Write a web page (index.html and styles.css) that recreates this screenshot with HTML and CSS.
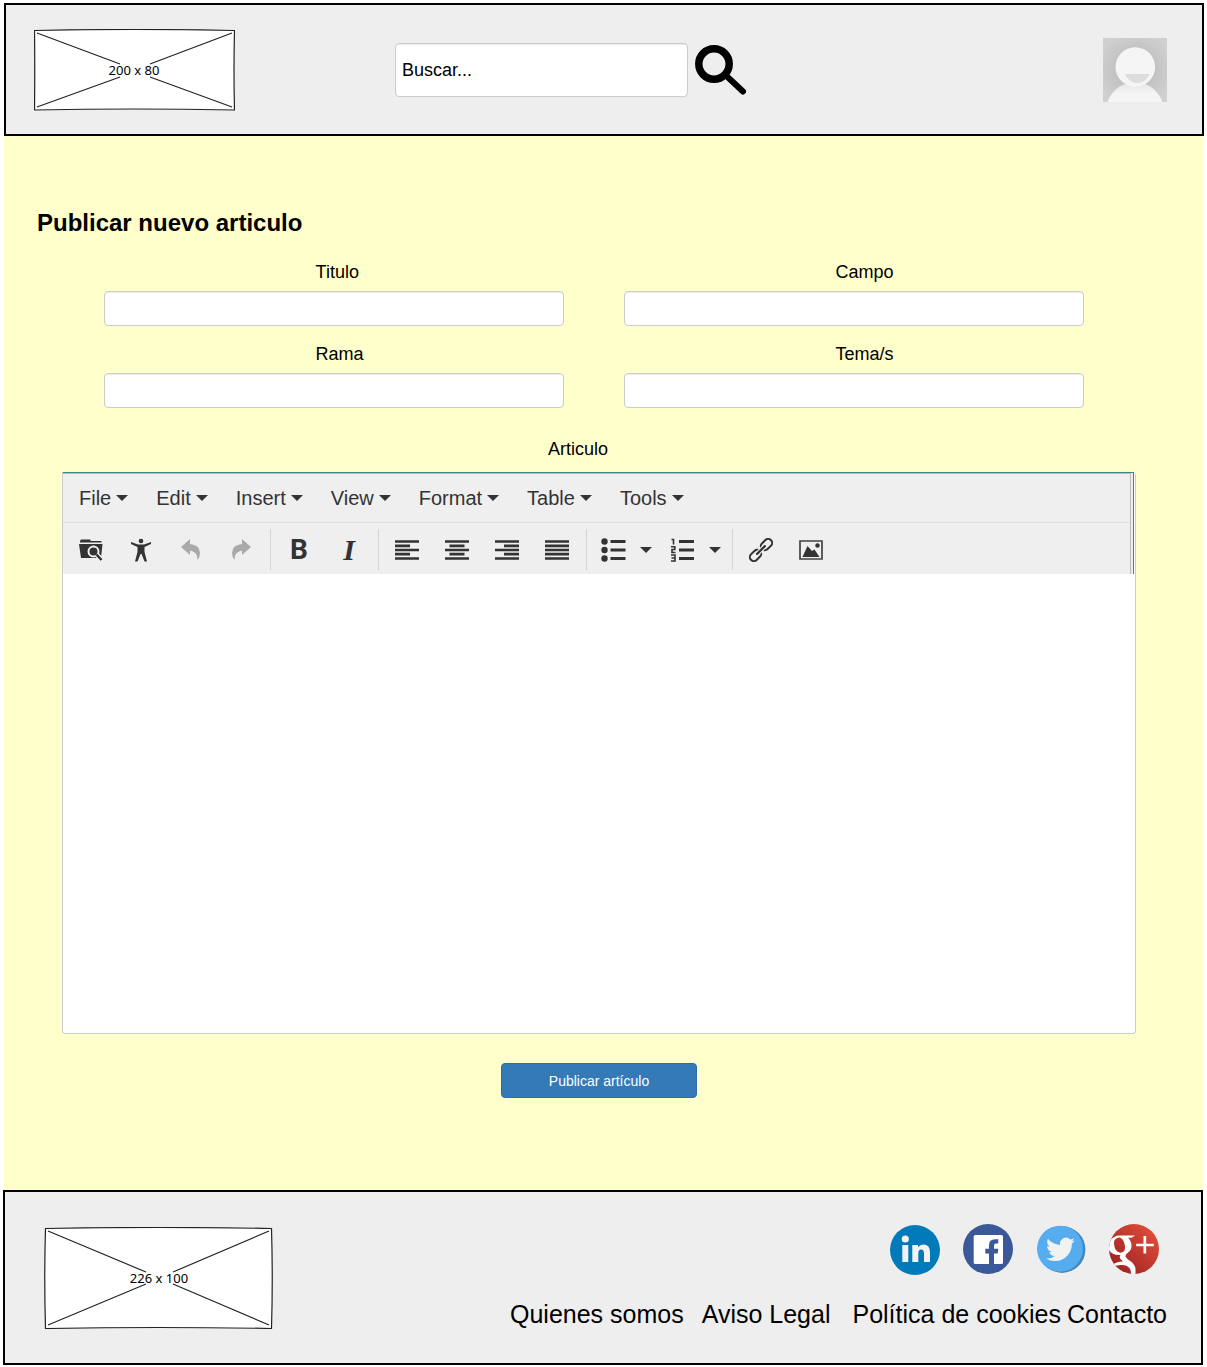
FILE: index.html
```html
<!DOCTYPE html>
<html lang="es">
<head>
<meta charset="utf-8">
<meta name="viewport" content="width=device-width, initial-scale=1">
<title>Publicar nuevo articulo</title>
<link rel="stylesheet" href="styles.css">
</head>
<body>
<header class="site-header">
  <a class="logo" href="#" aria-label="Inicio">
    <svg width="201" height="82" viewBox="0 0 201 82">
      <path d="M.5 1.5Q100 -.5 200.500 1.500Q199.500 41 200.500 81Q100 79 .5 81Q1 41 .5 1.500Z" fill="#fff" stroke="#222" stroke-width="1.200"/>
      <path d="M3 4 86 35M198 4 116 35M3 78 86 48M198 78 116 48" stroke="#222" stroke-width="1.200"/>
      <text class="logo-size" x="100" y="46">200 x 80</text>
    </svg>
  </a>
  <form class="search" role="search">
    <input class="search-input" type="text" value="Buscar..." aria-label="Buscar">
    <button class="search-button" type="button" aria-label="Buscar">
      <svg width="52" height="51" viewBox="0 0 52 51" fill="none" stroke="#000">
        <circle cx="19" cy="19" r="15.200" stroke-width="7.500"/>
        <path d="M31 30.500 48 46.500" stroke-width="6" stroke-linecap="round"/>
      </svg>
    </button>
  </form>
  <a class="avatar" href="#" aria-label="Perfil">
    <svg width="64" height="64" viewBox="0 0 64 64">
      <defs>
        <radialGradient id="shade" cx="50%" cy="50%" r="60%"><stop offset=".5" stop-color="#c2c2c2"/><stop offset="1" stop-color="#d0d0d0"/></radialGradient>
        <linearGradient id="torso" x1="0" y1="0" x2="0" y2="1"><stop offset="0" stop-color="#e4e4e4"/><stop offset=".6" stop-color="#f5f5f5"/></linearGradient>
      </defs>
      <path fill="url(#shade)" d="M0 0h64v64H0z"/>
      <path fill="url(#torso)" d="M4.500 64C10 50 21 44 32 44S54 50 59.500 64Z"/>
      <circle cx="32.300" cy="29" r="19.800" fill="#f5f5f5"/>
      <path fill="#ddd" d="M21.500 36H47Q42 45 34.300 45T21.500 36Z"/>
    </svg>
  </a>
</header>

<main class="content">
  <h1 class="title">Publicar nuevo articulo</h1>
  <form>
    <div class="fields">
      <div class="field"><label for="titulo">Titulo</label><input id="titulo" type="text"></div>
      <div class="field"><label for="campo">Campo</label><input id="campo" type="text"></div>
      <div class="field"><label for="rama">Rama</label><input id="rama" type="text"></div>
      <div class="field"><label for="temas">Tema/s</label><input id="temas" type="text"></div>
    </div>
    <div class="article">
      <label class="article-label" for="articulo">Articulo</label>
      <div class="editor">
        <div class="editor-bars">
          <div class="bars-inner">
            <div class="menu-bar">
              <button type="button">File</button>
              <button type="button">Edit</button>
              <button type="button">Insert</button>
              <button type="button">View</button>
              <button type="button">Format</button>
              <button type="button">Table</button>
              <button type="button">Tools</button>
            </div>
            <div class="tool-bar">
              <div class="group">
                <button type="button" aria-label="Explorar"><svg width="24" height="24" viewBox="0 0 24 24"><path d="M1 3 2 1.500H11L12 3H22.500V4.500H1ZM0 6H23.500L22 20H2Z" fill="#333"/><circle cx="14.500" cy="13.500" r="5" fill="#333" stroke="#f0f0f0" stroke-width="2"/><path d="m18 17 5 5" stroke="#f0f0f0" stroke-width="5"/><path d="m17.500 16.500 5 5.500" stroke="#333" stroke-width="2.500"/></svg></button>
                <button type="button" aria-label="Accesibilidad"><svg width="24" height="24" viewBox="0 0 24 24" fill="#333"><circle cx="12" cy="3" r="2.300"/><path d="M2 4 9 6.500H15L22 4V6L15.500 9V14L18 23.500H15.500L12.500 16H11.500L8.500 23.500H6L8.500 14V9L2 6Z"/></svg></button>
                <button type="button" aria-label="Deshacer"><svg width="22" height="24" viewBox="0 0 22 24"><path d="M1 9 10 1V6Q20 7 20 15 20 19 17.500 22 18 14 10 12.500V17Z" fill="#aaa"/></svg></button>
                <button type="button" aria-label="Rehacer"><svg width="22" height="24" viewBox="0 0 22 24"><path d="M21 9 12 1V6Q2 7 2 15 2 19 4.500 22 4 14 12 12.500V17Z" fill="#aaa"/></svg></button>
              </div>
              <div class="group">
                <button class="bold" type="button">B</button>
                <button class="italic" type="button">I</button>
              </div>
              <div class="group">
                <button type="button" aria-label="Alinear a la izquierda"><svg width="24" height="22" viewBox="0 0 24 22" stroke="#333" stroke-width="2.700"><path d="M0 2.500H24M0 6.800H15M0 11H24M0 15.200H15M0 19.500H24"/></svg></button>
                <button type="button" aria-label="Centrar"><svg width="24" height="22" viewBox="0 0 24 22" stroke="#333" stroke-width="2.700"><path d="M0 2.500H24M4.500 6.800H19.500M0 11H24M4.500 15.200H19.500M0 19.500H24"/></svg></button>
                <button type="button" aria-label="Alinear a la derecha"><svg width="24" height="22" viewBox="0 0 24 22" stroke="#333" stroke-width="2.700"><path d="M0 2.500H24M9 6.800H24M0 11H24M9 15.200H24M0 19.500H24"/></svg></button>
                <button type="button" aria-label="Justificar"><svg width="24" height="22" viewBox="0 0 24 22" stroke="#333" stroke-width="2.700"><path d="M0 2.500H24M0 6.800H24M0 11H24M0 15.200H24M0 19.500H24"/></svg></button>
              </div>
              <div class="group">
                <button class="split" type="button" aria-label="Lista"><svg width="25" height="24" viewBox="0 0 25 24" fill="#333"><circle cx="3.500" cy="3.500" r="3.200"/><circle cx="3.500" cy="12" r="3.200"/><circle cx="3.500" cy="20.500" r="3.200"/><path d="M9.500 2H24.500V5H9.500ZM9.500 10.500H24.500V13.500H9.500ZM9.500 19H24.500V22H9.500Z"/></svg></button>
                <button class="split" type="button" aria-label="Lista numerada"><svg width="25" height="24" viewBox="0 0 25 24" fill="none" stroke="#333" stroke-width="1.600"><path d="M1.500 1.500H3.500V6.500M1 8.800H4.800V11.500H2V14.500H5.500M1 17H5V23H1M1.500 20H5"/><path d="M9 3.500H24M9 12H24M9 20.500H24" stroke-width="3"/></svg></button>
              </div>
              <div class="group">
                <button type="button" aria-label="Enlace"><svg width="24" height="24" viewBox="0 0 24 24" fill="none" stroke="#333" stroke-width="2"><g transform="rotate(-45 12 12)"><rect x="-2" y="8" width="12.500" height="8" rx="3.800"/><rect x="13.500" y="8" width="12.500" height="8" rx="3.800"/><path d="M6.500 12H17.500" stroke="#efefef" stroke-width="4.500"/><path d="M6.500 12H17.500" stroke-width="2.200" stroke-linecap="round"/></g></svg></button>
                <button type="button" aria-label="Imagen"><svg width="24" height="20" viewBox="0 0 24 20"><path d="M1 1H23V19H1Z" fill="none" stroke="#444" stroke-width="1.700"/><path d="M3.500 17 8.500 6 13 11 15.500 9.500 20.500 17Z" fill="#333"/><circle cx="18.500" cy="5.500" r="2.200" fill="#333"/></svg></button>
              </div>
            </div>
          </div>
        </div>
        <textarea id="articulo"></textarea>
      </div>
      <button class="publish" type="submit">Publicar artículo</button>
    </div>
  </form>
</main>

<footer class="site-footer">
  <a class="logo" href="#" aria-label="Inicio">
    <svg width="229" height="102" viewBox="0 0 229 102">
      <path d="M1.500 1.500Q114 -.5 227.500 1.500Q229 51 227.500 101.500Q114 99.500 1.500 101.500Q0 51 1.500 1.500Z" fill="#fff" stroke="#222" stroke-width="1.200"/>
      <path d="M4 4 102 45M225 4 129 45M4 98 102 57M225 98 129 57" stroke="#222" stroke-width="1.200"/>
      <text class="logo-size" x="115" y="56">226 x 100</text>
    </svg>
  </a>
  <div class="footer-side">
    <div class="social">
      <a href="#" aria-label="LinkedIn"><svg width="50" height="51" viewBox="0 0 50 51"><circle cx="25" cy="26" r="25" fill="#007ab9"/><g fill="#f1f2f2"><circle cx="15.300" cy="15" r="3.600"/><path d="M12.300 21H18.300V38H12.300ZM22.300 21H28V23.300Q30 20.500 33.500 20.500 40 20.500 40 28.500V38H34V29.500Q34 25.500 31.300 25.500 28.300 25.500 28.300 29.500V38H22.300Z"/></g></svg></a>
      <a href="#" aria-label="Facebook"><svg width="50" height="51" viewBox="0 0 50 51"><circle cx="25" cy="25" r="25" fill="#3b5998"/><rect x="10.700" y="11" width="29.300" height="29" rx="1.600" fill="#fff"/><path d="M26 41V29.500H22.300V24.700H26V21.500Q26 15.200 32 15.200H35.300V19.500H33Q31 19.500 31 21.500V24.700H35.300L34.700 29.500H31V41Z" fill="#3b5998"/></svg></a>
      <a href="#" aria-label="Twitter"><svg width="50" height="51" viewBox="0 0 50 51"><circle cx="26" cy="25.500" r="23.400" fill="#4288bf"/><circle cx="24" cy="24.800" r="23" fill="#55acee"/><path transform="translate(10 11) scale(1.200)" fill="#f1f2f2" d="M23.950 4.570a10 10 0 0 1-2.820.77 4.960 4.960 0 0 0 2.160-2.720c-.95.560-2 .96-3.130 1.190a4.920 4.920 0 0 0-8.380 4.480C7.690 8.100 4.070 6.130 1.640 3.160a4.820 4.820 0 0 0-.67 2.480c0 1.710.87 3.210 2.190 4.100a4.900 4.900 0 0 1-2.230-.62v.06a4.920 4.920 0 0 0 3.950 4.830 5 5 0 0 1-2.210.08 4.940 4.940 0 0 0 4.600 3.420A9.870 9.870 0 0 1 0 19.540a14 14 0 0 0 7.550 2.210c9.050 0 14-7.500 14-13.980 0-.21 0-.42-.02-.63a9.940 9.940 0 0 0 2.420-2.570z"/></svg></a>
      <a href="#" aria-label="Google+"><svg width="50" height="51" viewBox="0 0 50 51"><defs><linearGradient id="gplus" x1="0" y1="1" x2="1" y2="0"><stop offset=".2" stop-color="#a52724"/><stop offset=".85" stop-color="#dc4a38"/></linearGradient><clipPath id="disc"><circle cx="25" cy="25" r="25"/></clipPath></defs><circle cx="25" cy="25" r="25" fill="url(#gplus)"/><g clip-path="url(#disc)"><path fill="#fff" fill-rule="evenodd" d="M10 11.500H26L22.500 13.800H19Q22.500 17 22.500 22 22.500 26 19 28.500 16 31 16.500 32.500 17.500 34.500 20.500 36.500 26 40 26.500 45V50H22Q22.500 42 14 41 8 40.500 4.500 42.500L3.500 41Q7 37.500 14 37.500L11.500 35Q10 33 11.500 31Q3 31.500 0 26V18Q4 12 10 11.500ZM10.500 13.500Q4.500 14 5 20 6 28.500 11.500 28.700 16.500 28.500 16 22.500 15 14.500 10.500 13.500Z"/><path fill="#fff" d="M34.500 12H37.200V19.700H44.800V22.300H37.200V29.500H34.500V22.300H27.200V19.700H34.500Z"/></g></svg></a>
    </div>
    <nav class="footer-links">
      <a href="#">Quienes somos</a>
      <a href="#">Aviso Legal</a>
      <a href="#">Política de cookies</a>
      <a href="#">Contacto</a>
    </nav>
  </div>
</footer>
</body>
</html>
```
FILE: styles.css
```css
* { box-sizing: border-box; }

body {
  margin: 0;
  padding: 3px 3px 2px 4px;
  background: #fff;
  color: #000;
  font: 18px/22px "Liberation Sans", Arial, sans-serif;
}

svg { display: block; }
a { color: inherit; text-decoration: none; }
button { padding: 0; border: 0; background: none; font: inherit; color: inherit; cursor: pointer; }

.logo-size {
  font: 13px "Noto Sans", sans-serif;
  text-anchor: middle;
}

/* Header */
.site-header {
  display: flex;
  align-items: center;
  padding: 24px 35px 23px 28px;
  border: 2px solid #000;
  background: #eee;
}
.search {
  display: flex;
  align-items: center;
  gap: 7px;
  margin-left: 160px;
}
.search-input {
  width: 293px;
  padding: 15px 6px;
}
.search-input,
.field input {
  border: 1px solid #ccc;
  border-radius: 4px;
  background: #fff;
  box-shadow: inset 0 1px 1px rgba(0, 0, 0, .08);
  color: #000;
  font: inherit;
}
.avatar { margin-left: auto; }

/* Article form */
.content {
  margin-right: 1px;
  padding: 73px 67px 92px 33px;
  background: #ffc;
}
.title { margin: 0 0 24px; font-size: 24px; line-height: 28px; }
.fields {
  display: grid;
  grid-template-columns: 1fr 1fr;
  gap: 17px 60px;
  padding: 0 52px 0 67px;
}
.field { display: grid; gap: 8px; }
.field label { padding-left: 46%; }
.field input { width: 100%; height: 35px; padding: 0 12px; }
.article { margin: 30px 0 0 25px; }
.article-label {
  display: block;
  margin-bottom: 12px;
  padding-right: 42px;
  text-align: center;
}

/* Rich text editor */
.editor {
  border: 1px solid #ccc;
  border-top: 0;
  border-radius: 0 4px 4px 4px;
  background: #fff;
}
.editor-bars {
  border: solid #3b8686;
  border-width: 1px 1px 0 0;
  padding-right: 2px;
  margin-right: 1px;
  background: #eee;
  color: #333;
}
.bars-inner {
  border: solid #bbb;
  border-width: 1px 1px 0 0;
  background: #efefef;
}
.menu-bar {
  display: flex;
  gap: 28px;
  padding: 12px 16px;
  border-bottom: 1px solid #e0e0e0;
  font-size: 20px;
  line-height: 24px;
}
.menu-bar button { display: flex; align-items: center; gap: 5px; }
.menu-bar button::after,
.split::after {
  content: "";
  border: solid transparent;
  border-width: 6px 6px 0;
  border-top-color: #333;
}
.tool-bar { display: flex; align-items: center; padding: 6px 3px 4px; }
.group { display: flex; align-items: center; height: 41px; }
.group + .group { margin-left: 4px; padding-left: 3px; border-left: 1px solid #d4d4d4; }
.group button {
  display: flex;
  align-items: center;
  justify-content: center;
  width: 50px;
  height: 36px;
}
.group .split { justify-content: flex-start; gap: 14px; width: 69px; padding-left: 11px; }
.group .bold { font: bold 28px Roboto, sans-serif; }
.group .italic { font: italic bold 30px "Liberation Serif", serif; }
.editor textarea {
  display: block;
  width: 100%;
  height: 459px;
  padding: 12px;
  border: 0;
  border-radius: 4px;
  background: #fff;
  font: inherit;
  resize: none;
}
.publish {
  display: block;
  width: 196px;
  margin: 29px auto 0;
  padding: 7px 0 6px;
  border: 1px solid #2e6da4;
  border-radius: 4px;
  background: #337ab7;
  color: #fff;
  font-size: 14px;
  line-height: 20px;
}

/* Footer */
.site-footer {
  display: flex;
  align-items: flex-end;
  justify-content: space-between;
  margin: 0 1px 0 -1px;
  padding: 32px 34px 34px 39px;
  border: 2px solid #000;
  background: #eee;
}
.footer-side { display: grid; gap: 24px; justify-items: end; }
.social { display: flex; gap: 23px; padding-right: 8px; }
.footer-links { display: flex; gap: 6px; font-size: 25px; line-height: 30px; }
.footer-links a:first-child { margin-right: 12px; }
.footer-links a:nth-child(2) { margin-right: 16px; }
```
